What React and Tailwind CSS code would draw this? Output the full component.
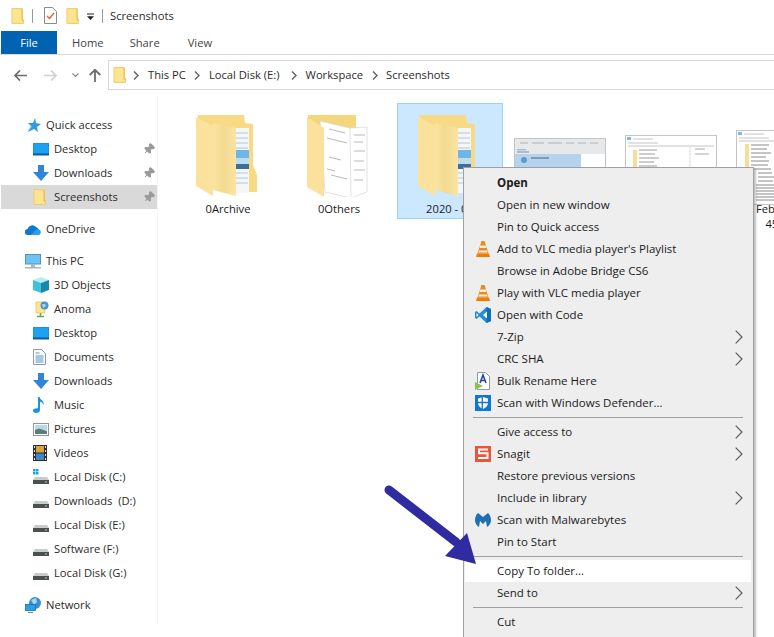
import { Pin } from 'lucide-react';

const SmallFolder = ({ className = '' }) => (
  <svg className={className} width="13" height="16" viewBox="0 0 14 17">
    <path d="M1 .5h11v12h1.500v4H1z" fill="#fde48f" stroke="#ecca6c" />
    <path d="M12 1v12h1.500" fill="none" stroke="#e2b94f" />
  </svg>
);

const Desktop = () => (
  <svg width="16" height="13" viewBox="0 0 16 13">
    <rect width="16" height="11.500" fill="#1a8fe3" />
    <rect x="1" y="1" width="14" height="9" fill="#1ea1f1" />
    <rect y="10.500" width="16" height="2" fill="#0b5f9e" />
  </svg>
);

const DownArrow = () => (
  <svg width="16" height="16" viewBox="0 0 16 16">
    <path d="M5 0h6v7h5l-8 9-8-9h5z" fill="#2f86d9" />
  </svg>
);

const Drive = ({ win }) => (
  <svg width="16" height="16" viewBox="0 0 16 16">
    {win && <path d="M0 0h2.500v2.500H0zM3 0h2.500v2.500H3zM0 3h2.500v2.500H0zM3 3h2.500v2.500H3z" fill="#18a0e8" />}
    <path d="M2 8h12l2 3H0z" fill="#c9cccd" />
    <rect y="11" width="16" height="4" fill="#4a4f50" />
    <rect x="12" y="12.500" width="2" height="1" fill="#9fe39a" />
  </svg>
);

const Star = () => (
  <svg width="16" height="16" viewBox="0 0 16 16">
    <path d="M10 1l1 5 5 1-4 3 1 5-4-3-6 3 3-6-3-3 5 0z" fill="#2f9be8" />
    <path d="M2 15l4-6 1 1z" fill="#8cc9f2" />
  </svg>
);

const Cloud = () => (
  <svg width="16" height="11" viewBox="0 0 16 11">
    <path d="M3 11a3 3 0 0 1-.5-6A5 5 0 0 1 11 3a3.500 3.500 0 0 1 2.500 2.500A2.800 2.800 0 0 1 13 11z" fill="#0f78d4" />
    <path d="M6 11l4-4.500a3 3 0 0 1 3.500-1A2.800 2.800 0 0 1 13 11z" fill="#2aa0ea" />
  </svg>
);

const Monitor = () => (
  <svg width="16" height="15" viewBox="0 0 16 15">
    <rect x=".5" y=".5" width="15" height="9.500" fill="#6cc4f5" stroke="#5b8fb0" />
    <rect x="6" y="10" width="4" height="3" fill="#a8b6bf" />
    <rect y="13" width="16" height="1.500" fill="#a8b6bf" />
  </svg>
);

const Cube = () => (
  <svg width="16" height="16" viewBox="0 0 16 16">
    <path d="M8 0l8 3-8 3-8-3z" fill="#b5ecf5" />
    <path d="M0 3l8 3v10l-8-3z" fill="#3fc1dc" />
    <path d="M16 3L8 6v10l8-3z" fill="#168aa8" />
  </svg>
);

const NetFolder = () => (
  <svg width="16" height="17" viewBox="0 0 16 17">
    <path d="M3 1h9v11H3z" fill="#fde48f" stroke="#e6c469" strokeWidth=".8" />
    <circle cx="11.500" cy="4.500" r="4" fill="#4f94c9" />
    <path d="M9 3h3l1 2-3 2z" fill="#a6d3ee" />
    <path d="M7.500 12v3M4 15.500h7" stroke="#5fae3f" strokeWidth="1.500" />
  </svg>
);

const Doc = () => (
  <svg width="13" height="16" viewBox="0 0 13 16">
    <path d="M.5.500h8l4 4v11H.5z" fill="#fff" stroke="#8f9aa3" />
    <path d="M2.500 4h4M2.500 7h8M2.500 9h8M2.500 11h8M2.500 13h8" stroke="#4a90c8" />
  </svg>
);

const Music = () => (
  <svg width="12" height="16" viewBox="0 0 12 16">
    <path d="M5 0h1.500c.5 3 5 3.500 4 8-.5-2-2-3-3.500-3.200V13c0 2-2 3-4 3S0 15 0 13.500 2 11 5 11.300z" fill="#1e8fe6" />
  </svg>
);

const Pictures = () => (
  <svg width="16" height="13" viewBox="0 0 16 13">
    <rect x=".5" y=".5" width="15" height="12" fill="#fff" stroke="#8c979f" />
    <rect x="2" y="2" width="12" height="5" fill="#b9d8ee" />
    <path d="M2 7l4-1.500L14 8v3H2z" fill="#5d7c72" />
  </svg>
);

const Videos = () => (
  <svg width="14" height="16" viewBox="0 0 14 16">
    <rect width="14" height="16" fill="#2d2f33" />
    <rect x="3" y="1" width="8" height="6.500" fill="#d9a441" />
    <rect x="3" y="8.500" width="8" height="6.500" fill="#3f87c6" />
    <path d="M1 1h1v2H1zM1 5h1v2H1zM1 9h1v2H1zM1 13h1v2H1zM12 1h1v2h-1zM12 5h1v2h-1zM12 9h1v2h-1zM12 13h1v2h-1z" fill="#e8e8e8" />
  </svg>
);

const Globe = () => (
  <svg width="16" height="16" viewBox="0 0 16 16">
    <circle cx="10" cy="6" r="6" fill="#3f8fce" />
    <path d="M6 3l5-2 1 4-3 3z" fill="#a7d5ef" />
    <rect x=".5" y="7.500" width="10" height="6" fill="#2a9ee8" stroke="#1a6fb0" strokeWidth=".8" />
    <path d="M3 15.500h5" stroke="#6b8ea5" />
  </svg>
);

const Vlc = () => (
  <svg width="14" height="16" viewBox="0 0 14 16">
    <path d="M5.500 0h3l4 12.500h-11z" fill="#f08a12" />
    <path d="M4.300 4.500h5.400l.7 2.500H3.600zM3 9.500h8l.6 2H2.400z" fill="#f4efe6" />
    <path d="M1 12.500h12l1 3.500H0z" fill="#ee7c0a" />
  </svg>
);

const VsCode = () => (
  <svg width="16" height="16" viewBox="0 0 16 16">
    <path d="M11.500 0L16 2v12l-4.500 2L4.500 9.500 1.500 12 0 11V5l1.500-1 3 2.500z" fill="#1f8fd8" />
    <path d="M1.500 6L3.500 8l-2 2z" fill="#fff" />
    <path d="M11.500 0L16 2v12l-4.500 2z" fill="#0f6fb8" />
    <path d="M12 4.500v7L8 8z" fill="#fff" />
  </svg>
);

const BulkRename = () => (
  <svg width="15" height="18" viewBox="0 0 15 18">
    <path d="M2.500.500h8l4 4v13h-12z" fill="#fff" stroke="#8f9aa3" />
    <path d="M5 11L8 3l3 8M6.200 8.500h3.600" fill="none" stroke="#1c3fa8" strokeWidth="1.500" />
    <path d="M0 10l8 4-8 4z" fill="#8cc152" />
  </svg>
);

const Defender = () => (
  <svg width="16" height="16" viewBox="0 0 16 16">
    <rect width="16" height="16" fill="#0f78d4" />
    <path d="M8 2l5 1.500V8c0 3-2.500 5-5 6-2.500-1-5-3-5-6V3.500z" fill="#fff" />
    <path d="M7.300 2v12M3 7.500h10" stroke="#0f78d4" strokeWidth="1.300" />
  </svg>
);

const Snagit = () => (
  <svg width="16" height="16" viewBox="0 0 16 16">
    <rect width="16" height="16" fill="#e9553a" />
    <path d="M13 3.500H4v3.700h8.500v4.800H3" fill="none" stroke="#fff" strokeWidth="2" />
  </svg>
);

const Malwarebytes = () => (
  <svg width="16" height="14" viewBox="0 0 16 14">
    <path d="M3 0l5 4 5-4c2 2 3 4.500 3 7 0 3-1.500 5.500-4 7l-1-6-3 3-3-3-1 6C1.500 12.500 0 10 0 7c0-2.500 1-5 3-7z" fill="#1f6fb5" />
  </svg>
);

const Chevron = ({ className = '' }) => (
  <svg className={className} width="6" height="9" viewBox="0 0 6 9">
    <path d="M1 .5l4 4-4 4" fill="none" stroke="#666" strokeWidth="1.500" />
  </svg>
);

const navGroups = [
  [
    { label: 'Quick access', icon: <Star />, top: true },
    { label: 'Desktop', icon: <Desktop />, pin: true },
    { label: 'Downloads', icon: <DownArrow />, pin: true },
    { label: 'Screenshots', icon: <SmallFolder />, pin: true, selected: true },
  ],
  [{ label: 'OneDrive', icon: <Cloud />, top: true }],
  [
    { label: 'This PC', icon: <Monitor />, top: true },
    { label: '3D Objects', icon: <Cube /> },
    { label: 'Anoma', icon: <NetFolder /> },
    { label: 'Desktop', icon: <Desktop /> },
    { label: 'Documents', icon: <Doc /> },
    { label: 'Downloads', icon: <DownArrow /> },
    { label: 'Music', icon: <Music /> },
    { label: 'Pictures', icon: <Pictures /> },
    { label: 'Videos', icon: <Videos /> },
    { label: 'Local Disk (C:)', icon: <Drive win /> },
    { label: 'Downloads  (D:)', icon: <Drive /> },
    { label: 'Local Disk (E:)', icon: <Drive /> },
    { label: 'Software (F:)', icon: <Drive /> },
    { label: 'Local Disk (G:)', icon: <Drive /> },
  ],
  [{ label: 'Network', icon: <Globe />, top: true }],
];

const menuGroups = [
  [
    { label: 'Open', bold: true },
    { label: 'Open in new window' },
    { label: 'Pin to Quick access' },
    { label: "Add to VLC media player's Playlist", icon: <Vlc /> },
    { label: 'Browse in Adobe Bridge CS6' },
    { label: 'Play with VLC media player', icon: <Vlc /> },
    { label: 'Open with Code', icon: <VsCode /> },
    { label: '7-Zip', more: true },
    { label: 'CRC SHA', more: true },
    { label: 'Bulk Rename Here', icon: <BulkRename /> },
    { label: 'Scan with Windows Defender...', icon: <Defender /> },
  ],
  [
    { label: 'Give access to', more: true },
    { label: 'Snagit', icon: <Snagit />, more: true },
    { label: 'Restore previous versions' },
    { label: 'Include in library', more: true },
    { label: 'Scan with Malwarebytes', icon: <Malwarebytes /> },
    { label: 'Pin to Start' },
  ],
  [
    { label: 'Copy To folder...', hot: true },
    { label: 'Send to', more: true },
  ],
  [{ label: 'Cut' }],
];

function NavRow({ item }) {
  return (
    <div className={`flex h-6 items-center ${item.top ? 'pl-[24px]' : 'pl-[32px]'} ${item.selected ? 'bg-[#d9d9d9]' : ''}`}>
      <span className="flex w-[21px] shrink-0 items-center">{item.icon}</span>
      <span className="whitespace-pre">{item.label}</span>
      {item.pin && <Pin className="ml-auto mr-[2px] h-[12px] w-[12px] rotate-45 fill-[#9a9a9a] text-[#9a9a9a]" />}
    </div>
  );
}

function BigFolder({ papers }) {
  return (
    <svg width="62" height="82" viewBox="0 0 62 82">
      <defs>
        <linearGradient id="flap" x1="0" x2="1" y1="0" y2="0">
          <stop offset="0" stopColor="#fbe4a2" />
          <stop offset="0.45" stopColor="#f2da92" />
          <stop offset="1" stopColor="#fbe4a2" />
        </linearGradient>
      </defs>
      {papers ? (
        <>
          <path d="M1 0h48v14H1z" fill="#f4d67c" />
          <path d="M13 6l30 7 17-1v65l-16 6-26-6z" fill="#fff" />
          <path d="M13 6l30 7 1 70-26-6zM43 13l17-1v65l-16 6" fill="none" stroke="#d6d6d6" strokeWidth=".7" />
          <path d="M22 14l16 4M20 23l20 5M22 42l12 3M20 54l8 2M24 60l16 4M47 20h11M47 27h9M47 36h11M47 46h10M47 55h11M47 65h9" stroke="#9b9b9b" strokeWidth=".7" />
          <path d="M0 2l17 11v69L0 72z" fill="#fbe29c" />
        </>
      ) : (
        <>
          <path d="M1 0h47l1 8 8 1v41l4 10v17H30z" fill="#f8da85" />
          <rect x="36" y="13" width="17" height="65" fill="#f4f6f8" />
          <path d="M39 18h13M39 23h13M39 28h13M39 33h13M39 58h13M39 63h13M39 68h13" stroke="#a9c3d8" strokeWidth=".9" />
          <rect x="39" y="35" width="14" height="8" fill="#6fb6e6" />
          <rect x="39" y="43" width="14" height="6" fill="#bcdcf0" />
          <rect x="39" y="49" width="14" height="5" fill="#3b6f99" />
          <path d="M17 8l23 5v68l-23-6z" fill="url(#flap)" />
          <path d="M0 2l17 9v70L0 71z" fill="#fbe29c" />
        </>
      )}
    </svg>
  );
}

function Thumb({ kind, height = 90 }) {
  return (
    <svg width="92" height={height} viewBox={`0 0 92 ${height}`}>
      <rect x=".5" y=".5" width="91" height={height - 1} fill="#fff" stroke="#c4c4c4" />
      {kind === 'search' && (
        <>
          <rect x="1" y="1" width="90" height="15" fill="#e6e8ea" />
          <path d="M6 5h8M18 5h12M34 5h14M52 5h8M64 5h8M76 5h8" stroke="#c2c5c8" strokeWidth="1.500" />
          <rect x="3" y="11" width="9" height="1.500" fill="#8cc3ea" />
          <path d="M3 14h12" stroke="#8a8a8a" />
          <rect x="1" y="16" width="66" height="30" fill="#b5d3ee" />
          <circle cx="10" cy="22" r="3" fill="#5a9bd0" />
          <path d="M17 20h18" stroke="#5d7890" strokeWidth="1.200" />
        </>
      )}
      {kind === 'explorer' && (
        <>
          <rect x="2" y="2" width="4" height="3" fill="#7fb8e2" />
          <path d="M8 4h20M3 8h30M3 11h86" stroke="#c0c4c7" />
          <path d="M10 15v60" stroke="#f5dd9b" strokeWidth="4" />
          <path d="M14 15h18M14 19h16M14 23h20M14 27h15M14 31h18M14 35h17M14 39h20M14 43h14M14 47h19M14 51h15" stroke="#9a9a9a" />
          <path d="M65 12v60" stroke="#dcdcdc" />
          <path d="M70 14h10M70 19h14" stroke="#aaa" />
        </>
      )}
      {kind === 'tree' && (
        <>
          <rect x="2" y="2" width="4" height="3" fill="#7fb8e2" />
          <path d="M8 4h20M3 8h30M3 11h86" stroke="#c0c4c7" />
          <path d="M11 14v40" stroke="#f5dd9b" strokeWidth="4" />
          <path d="M15 15h18M15 19h16M15 23h20M15 27h15M15 31h18M15 35h17M15 39h20M22 43h14M22 47h19M22 51h15M20 55h40M20 58h40M20 61h42M20 64h38M20 67h40M20 70h36" stroke="#8a8a8a" />
        </>
      )}
    </svg>
  );
}

function Tile({ children, label, selected }) {
  return (
    <div className={`h-[116px] w-[106px] shrink-0 border text-center ${selected ? 'border-[#99d1ff] bg-[#cce8ff]' : 'border-transparent'}`}>
      <div className="flex h-[93px] items-end justify-center pr-[2px]">{children}</div>
      <div className="mt-[4px] whitespace-pre leading-[15px] text-[#1a1a1a]">{label}</div>
    </div>
  );
}

export default function App() {
  return (
    <div className="relative h-[637px] w-[774px] overflow-hidden bg-white font-['Open_Sans',sans-serif] text-[11.2px] text-[#2b2b2b]">
      {/* Title bar */}
      <div className="flex h-[31px] items-center pl-[11px]">
        <SmallFolder />
        <div className="ml-[8px] h-[14px] w-px bg-[#9a9a9a]" />
        <svg className="ml-[11px]" width="13" height="17" viewBox="0 0 13 17">
          <path d="M.5.500h8l4 4v12H.5z" fill="#fff" stroke="#8a8a8a" />
          <path d="M3 9l2.500 2.500L10 6" fill="none" stroke="#d9622b" strokeWidth="1.300" />
        </svg>
        <SmallFolder className="ml-[9px]" />
        <svg className="ml-[8px] mt-[2px]" width="7" height="8" viewBox="0 0 8 8">
          <path d="M0 0h8v1H0zM0 3h8L4 7.500z" fill="#222" />
        </svg>
        <div className="ml-[8px] h-[14px] w-px bg-[#9a9a9a]" />
        <span className="ml-[7px] mt-[2px]">Screenshots</span>
      </div>

      {/* Ribbon tabs */}
      <div className="flex h-[24px] border-b border-[#dadbdc] pl-px text-[#444]">
        <div className="flex h-[23px] w-[56px] items-center justify-center bg-[#0063b1] pt-[1px] text-white">File</div>
        <div className="ml-[15px] flex items-center pt-[2px]">Home</div>
        <div className="ml-[26px] flex items-center pt-[2px]">Share</div>
        <div className="ml-[28px] flex items-center pt-[2px]">View</div>
      </div>

      {/* Address bar */}
      <div className="flex h-[40px] items-center">
        <svg className="ml-[14px]" width="13" height="11" viewBox="0 0 13 11">
          <path d="M6 .5L1 5.500l5 5M1 5.500h12" fill="none" stroke="#6d6d6d" strokeWidth="1.700" />
        </svg>
        <svg className="ml-[17px]" width="13" height="11" viewBox="0 0 13 11">
          <path d="M7 .5l5 5-5 5M12 5.500H0" fill="none" stroke="#d0d0d0" strokeWidth="1.700" />
        </svg>
        <svg className="ml-[15px]" width="7" height="5" viewBox="0 0 7 5">
          <path d="M.5.500l3 3 3-3" fill="none" stroke="#8a8a8a" strokeWidth="1.200" />
        </svg>
        <svg className="ml-[10px]" width="12" height="13" viewBox="0 0 12 13">
          <path d="M.7 6L6 .8 11.300 6M6 1v12" fill="none" stroke="#6d6d6d" strokeWidth="1.800" />
        </svg>
        <div className="ml-[7px] flex h-[30px] flex-1 items-center border border-r-0 border-[#d9d9d9] pl-[4px]">
          <SmallFolder />
          <Chevron className="ml-[7px]" />
          <span className="ml-[9px]">This PC</span>
          <Chevron className="ml-[8px]" />
          <span className="ml-[9px]">Local Disk (E:)</span>
          <Chevron className="ml-[11px]" />
          <span className="ml-[9px]">Workspace</span>
          <Chevron className="ml-[9px]" />
          <span className="ml-[8px]">Screenshots</span>
        </div>
      </div>

      <div className="flex">
        {/* Sidebar */}
        <nav className="w-[158px] shrink-0 border-r border-[#f4f4f4] pl-px pt-[18px]">
          {navGroups.map((group, i) => (
            <div key={i} className="mb-2">
              {group.map((item, j) => (
                <NavRow key={j} item={item} />
              ))}
            </div>
          ))}
        </nav>

        {/* Folder tiles */}
        <div className="flex gap-[5px] pl-[17px] pt-[8px]">
          <Tile label="0Archive">
            <BigFolder />
          </Tile>
          <Tile label="0Others">
            <BigFolder papers />
          </Tile>
          <Tile label="2020 - 02" selected>
            <BigFolder />
          </Tile>
          <Tile label="">
            <div className="-mb-[31px]">
              <Thumb kind="search" />
            </div>
          </Tile>
          <Tile label="">
            <div className="-mb-[28px]">
              <Thumb kind="explorer" />
            </div>
          </Tile>
          <Tile label={'Feb 2020 -\n45 (12)'}>
            <div className="-mb-[8px]">
              <Thumb kind="tree" height={75} />
            </div>
          </Tile>
        </div>
      </div>

      {/* Context menu, runs off the bottom of the window */}
      <div className="absolute left-[463px] top-[167px] w-[291px] border border-[#a0a0a0] bg-[#eeeeee] pb-[12px] pl-px pr-[2px] pt-[4px] text-[11.5px] text-[#1a1a1a] shadow-[2px_2px_2px_rgba(0,0,0,0.25)]">
        {menuGroups.map((group, i) => (
          <div key={i}>
            {i > 0 && (
              <div className="flex h-[7px] items-center pl-[8px] pr-[8px]">
                <div className="h-px w-full bg-[#a0a0a0]" />
              </div>
            )}
            {group.map((item, j) => (
              <div key={j} className={`flex h-[22px] items-center ${item.hot ? 'bg-white' : ''}`}>
                <span className="flex w-[32px] shrink-0 justify-center pl-[3px]">{item.icon}</span>
                <span className={item.bold ? 'font-bold' : ''}>{item.label}</span>
                {item.more && (
                  <svg className="ml-auto mr-[8px]" width="8" height="14" viewBox="0 0 8 14">
                    <path d="M.7.700L7 7 .7 13.300" fill="none" stroke="#555" strokeWidth="1.100" />
                  </svg>
                )}
              </div>
            ))}
          </div>
        ))}
      </div>

      {/* Annotation arrow */}
      <svg className="absolute left-[380px] top-[480px]" width="100" height="90" viewBox="0 0 100 90">
        <path d="M9 10L76 62" stroke="#2f2ba0" strokeWidth="9" strokeLinecap="round" />
        <path d="M96 84L65 76 87 53z" fill="#2f2ba0" />
      </svg>
    </div>
  );
}
